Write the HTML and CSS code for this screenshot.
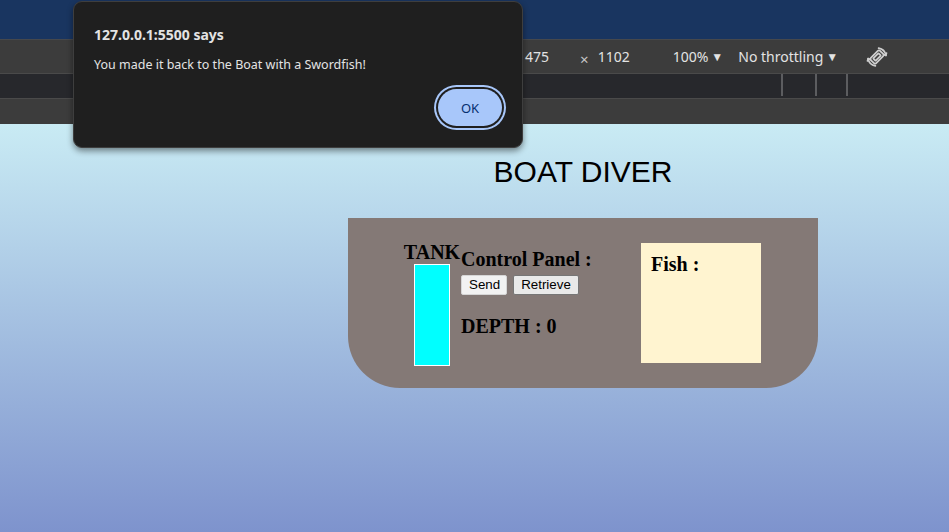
FILE: index.html
```html
<!DOCTYPE html>
<html>
<head>
<meta charset="utf-8">
<title>Boat Diver</title>
<link rel="stylesheet" href="styles.css">
</head>
<body>
<div class="chrome">
  <div class="tabbar"></div>
  <div class="toolbar">
    <span class="dim w">1475</span>
    <span class="times">×</span>
    <span class="dim h">1102</span>
    <span class="select zoom">100%<span class="caret">▼</span></span>
    <span class="select throttle">No throttling<span class="caret">▼</span></span>
    <svg class="rotate" width="24" height="24" viewBox="0 0 24 24" fill="none" stroke="#cfcfcf" stroke-width="1.7" stroke-linecap="round" stroke-linejoin="round">
      <rect x="8.2" y="5.5" width="7.6" height="13" rx="1.6" transform="rotate(45 12 12)"/>
      <rect x="10.3" y="8.2" width="3.4" height="7.6" rx="0.6" transform="rotate(45 12 12)"/>
      <path d="M13.6 3.1 A9 9 0 0 1 20.9 10.4"/>
      <path d="M10.4 20.9 A9 9 0 0 1 3.1 13.6"/>
      <path d="M18.6 9.6 L20.9 10.4 L21.5 8"/>
      <path d="M5.4 14.4 L3.1 13.6 L2.5 16"/>
    </svg>
  </div>
  <div class="rulerbar">
    <span class="mark m1"></span>
    <span class="mark m2"></span>
    <span class="mark m3"></span>
  </div>
  <div class="bar"></div>
</div>

<main class="page">
  <div class="content">
    <h1 class="title">BOAT DIVER</h1>
    <section class="boat">
      <div class="tank-col">
        <div class="label">TANK</div>
        <div class="tank"></div>
      </div>
      <div class="control">
        <div class="label">Control Panel :</div>
        <div class="buttons">
          <button class="btn send">Send</button>
          <button class="btn retrieve">Retrieve</button>
        </div>
        <div class="label depth">DEPTH : 0</div>
      </div>
      <div class="fish">
        <div class="label">Fish :</div>
      </div>
    </section>
  </div>
</main>

<div class="dialog">
  <div class="dialog-title">127.0.0.1:5500 says</div>
  <div class="dialog-msg">You made it back to the Boat with a Swordfish!</div>
  <div class="dialog-actions">
    <button class="ok">OK</button>
  </div>
</div>
</body>
</html>
```

FILE: styles.css
```css
html, body {
  margin: 0;
  padding: 0;
  width: 949px;
  height: 532px;
  overflow: hidden;
  background: #7e93cd;
}

body {
  font-family: "Liberation Serif", serif;
}

/* ---------- browser chrome ---------- */
.chrome {
  display: flex;
  flex-direction: column;
}

.tabbar {
  height: 39px;
  background: #193560;
  border-bottom: 1px solid #46484c;
}

.toolbar {
  height: 33px;
  background: #3c3c3c;
  border-bottom: 1px solid #4a4a4a;
  display: flex;
  align-items: center;
  padding-left: 517px;
  font-family: "Noto Sans", "Open Sans", sans-serif;
  font-size: 14px;
  color: #e3e3e3;
}

.dim.w {
  letter-spacing: 0;
}

.times {
  margin-left: 31px;
  font-size: 15px;
  color: #c8c8c8;
  position: relative;
  top: 2px;
}

.dim.h {
  margin-left: 9px;
}

.select {
  display: flex;
  align-items: center;
}

.zoom {
  margin-left: 43px;
}

.throttle {
  margin-left: 15px;
}

.caret {
  font-size: 12px;
  margin-left: 3px;
  color: #e3e3e3;
}

.rotate {
  margin-left: 27px;
}

.rulerbar {
  height: 24px;
  background: #27282c;
  display: flex;
  align-items: flex-start;
  padding-left: 781px;
}

.mark {
  width: 2px;
  height: 22px;
  background: #5c5d60;
}

.m2 { margin-left: 32px; }
.m3 { margin-left: 29px; }

.bar {
  height: 25px;
  background: #3c3c3c;
  border-top: 1px solid #4a4a4a;
}

/* ---------- page ---------- */
.page {
  height: 408px;
  background: linear-gradient(to bottom, #c9ebf4 0%, #7e93cd 100%);
  padding-left: 348px;
}

.content {
  width: 470px;
  display: flex;
  flex-direction: column;
}

.title {
  margin: 30px 0 0 0;
  font-family: "Liberation Sans", Arial, sans-serif;
  font-weight: normal;
  font-size: 30px;
  line-height: 35px;
  color: #000;
  text-align: center;
}

.boat {
  margin-top: 29px;
  height: 170px;
  background: #847976;
  border-radius: 0 0 52px 52px;
  display: flex;
  align-items: flex-start;
  padding-left: 56px;
  box-sizing: border-box;
}

.label {
  font-family: "Liberation Serif", serif;
  font-weight: bold;
  font-size: 20px;
  line-height: 24px;
  color: #000;
  white-space: nowrap;
}

.tank-col {
  margin-top: 22px;
  width: 56px;
  display: flex;
  flex-direction: column;
  align-items: center;
}

.tank {
  width: 34px;
  height: 100px;
  background: #00ffff;
  border: 1px solid #ffffff;
}

.control {
  margin-top: 29px;
  margin-left: 1px;
  width: 180px;
  display: flex;
  flex-direction: column;
  align-items: flex-start;
}

.buttons {
  margin-top: 4px;
  display: flex;
  gap: 6px;
}

.btn {
  font-family: "Liberation Sans", Arial, sans-serif;
  font-size: 13.33px;
  height: 20px;
  padding: 0 7px;
  margin: 0;
  background: #efefef;
  color: #000;
  border: 1px solid #767676;
  border-radius: 2px;
  line-height: 18px;
}

.send {
  width: 46px;
  border-color: #d6d6d6;
  background: #f2f2f2;
}

.retrieve {
  width: 66px;
  background: #e9e9e9;
}

.depth {
  margin-top: 19px;
}

.fish {
  margin-top: 25px;
  width: 120px;
  height: 120px;
  box-sizing: border-box;
  background: #fff4d0;
  padding: 9px 10px;
}

/* ---------- alert dialog ---------- */
.dialog {
  position: absolute;
  left: 73px;
  top: 1px;
  width: 450px;
  height: 147px;
  box-sizing: border-box;
  background: #1f1f1f;
  border: 1px solid #3e3e3e;
  border-radius: 9px;
  box-shadow: 0 3px 6px rgba(0, 0, 0, 0.45);
  padding: 23px 20px 0 20px;
  display: flex;
  flex-direction: column;
  font-family: "Noto Sans", "Open Sans", sans-serif;
  color: #e3e3e3;
}

.dialog-title {
  font-size: 14px;
  font-weight: bold;
  line-height: 20px;
}

.dialog-msg {
  margin-top: 11px;
  font-size: 12.5px;
  line-height: 18px;
}

.dialog-actions {
  margin-top: 15px;
  display: flex;
  justify-content: flex-end;
}

.ok {
  width: 64px;
  height: 37px;
  border: none;
  border-radius: 19px;
  background: #a8c7fa;
  color: #062e6f;
  font-family: "Noto Sans", "Open Sans", sans-serif;
  font-size: 13px;
  box-shadow: 0 0 0 2px #1f1f1f, 0 0 0 4px #a8c7fa;
  padding: 0;
}
```
